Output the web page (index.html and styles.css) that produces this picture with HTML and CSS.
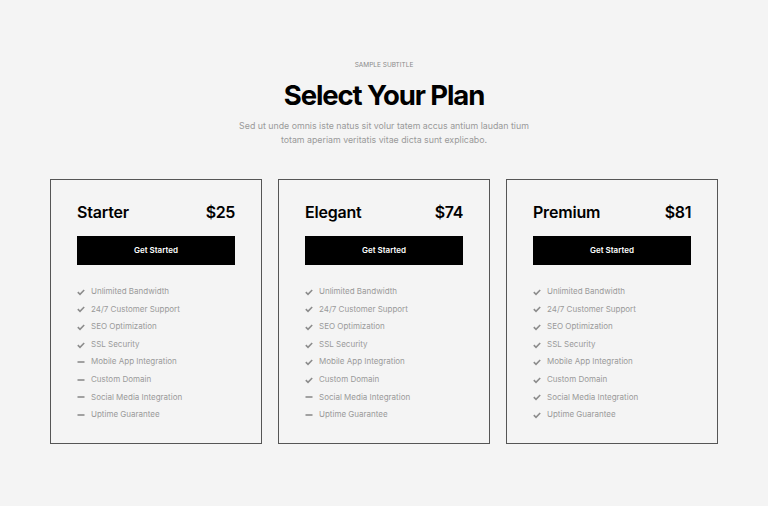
FILE: index.html
```html
<!DOCTYPE html>
<html lang="en">
<head>
    <meta charset="UTF-8">
    <meta name="viewport" content="width=device-width, initial-scale=1.0">
    <title>Select Your Plan</title>
    <link rel="stylesheet" href="styles.css">
</head>
<body>
    <section class="pricing">
        <div class="pricing-head">
            <p class="subtitle">Sample Subtitle</p>
            <h1>Select Your Plan</h1>
            <p class="lead">Sed ut unde omnis iste natus sit volur tatem accus antium laudan tium<br>totam aperiam veritatis vitae dicta sunt explicabo.</p>
        </div>

        <div class="plans">
            <div class="plan">
                <div class="plan-top">
                    <h2>Starter</h2>
                    <span class="price">$25</span>
                </div>
                <a class="button" href="#">Get Started</a>
                <ul class="features">
                    <li><svg class="icon" viewBox="0 0 8 8"><path d="M0.8 4.2 L3 6.3 L7.2 2"/></svg>Unlimited Bandwidth</li>
                    <li><svg class="icon" viewBox="0 0 8 8"><path d="M0.8 4.2 L3 6.3 L7.2 2"/></svg>24/7 Customer Support</li>
                    <li><svg class="icon" viewBox="0 0 8 8"><path d="M0.8 4.2 L3 6.3 L7.2 2"/></svg>SEO Optimization</li>
                    <li><svg class="icon" viewBox="0 0 8 8"><path d="M0.8 4.2 L3 6.3 L7.2 2"/></svg>SSL Security</li>
                    <li><svg class="icon" viewBox="0 0 8 8"><path d="M0.5 4 H7.5"/></svg>Mobile App Integration</li>
                    <li><svg class="icon" viewBox="0 0 8 8"><path d="M0.5 4 H7.5"/></svg>Custom Domain</li>
                    <li><svg class="icon" viewBox="0 0 8 8"><path d="M0.5 4 H7.5"/></svg>Social Media Integration</li>
                    <li><svg class="icon" viewBox="0 0 8 8"><path d="M0.5 4 H7.5"/></svg>Uptime Guarantee</li>
                </ul>
            </div>

            <div class="plan">
                <div class="plan-top">
                    <h2>Elegant</h2>
                    <span class="price">$74</span>
                </div>
                <a class="button" href="#">Get Started</a>
                <ul class="features">
                    <li><svg class="icon" viewBox="0 0 8 8"><path d="M0.8 4.2 L3 6.3 L7.2 2"/></svg>Unlimited Bandwidth</li>
                    <li><svg class="icon" viewBox="0 0 8 8"><path d="M0.8 4.2 L3 6.3 L7.2 2"/></svg>24/7 Customer Support</li>
                    <li><svg class="icon" viewBox="0 0 8 8"><path d="M0.8 4.2 L3 6.3 L7.2 2"/></svg>SEO Optimization</li>
                    <li><svg class="icon" viewBox="0 0 8 8"><path d="M0.8 4.2 L3 6.3 L7.2 2"/></svg>SSL Security</li>
                    <li><svg class="icon" viewBox="0 0 8 8"><path d="M0.8 4.2 L3 6.3 L7.2 2"/></svg>Mobile App Integration</li>
                    <li><svg class="icon" viewBox="0 0 8 8"><path d="M0.8 4.2 L3 6.3 L7.2 2"/></svg>Custom Domain</li>
                    <li><svg class="icon" viewBox="0 0 8 8"><path d="M0.5 4 H7.5"/></svg>Social Media Integration</li>
                    <li><svg class="icon" viewBox="0 0 8 8"><path d="M0.5 4 H7.5"/></svg>Uptime Guarantee</li>
                </ul>
            </div>

            <div class="plan">
                <div class="plan-top">
                    <h2>Premium</h2>
                    <span class="price">$81</span>
                </div>
                <a class="button" href="#">Get Started</a>
                <ul class="features">
                    <li><svg class="icon" viewBox="0 0 8 8"><path d="M0.8 4.2 L3 6.3 L7.2 2"/></svg>Unlimited Bandwidth</li>
                    <li><svg class="icon" viewBox="0 0 8 8"><path d="M0.8 4.2 L3 6.3 L7.2 2"/></svg>24/7 Customer Support</li>
                    <li><svg class="icon" viewBox="0 0 8 8"><path d="M0.8 4.2 L3 6.3 L7.2 2"/></svg>SEO Optimization</li>
                    <li><svg class="icon" viewBox="0 0 8 8"><path d="M0.8 4.2 L3 6.3 L7.2 2"/></svg>SSL Security</li>
                    <li><svg class="icon" viewBox="0 0 8 8"><path d="M0.8 4.2 L3 6.3 L7.2 2"/></svg>Mobile App Integration</li>
                    <li><svg class="icon" viewBox="0 0 8 8"><path d="M0.8 4.2 L3 6.3 L7.2 2"/></svg>Custom Domain</li>
                    <li><svg class="icon" viewBox="0 0 8 8"><path d="M0.8 4.2 L3 6.3 L7.2 2"/></svg>Social Media Integration</li>
                    <li><svg class="icon" viewBox="0 0 8 8"><path d="M0.8 4.2 L3 6.3 L7.2 2"/></svg>Uptime Guarantee</li>
                </ul>
            </div>
        </div>
    </section>
</body>
</html>
```

FILE: styles.css
```css
body {
    font-family: 'Inter', 'Noto Sans', sans-serif;
    background-color: #f4f4f4;
    color: #000;
    margin: 0;
    padding: 0;
}
.pricing {
    width: 668px;
    margin: 0 auto;
    padding-top: 60px;
}
.pricing-head {
    text-align: center;
}
.subtitle {
    margin: 0;
    font-size: 6.5px;
    line-height: 10px;
    text-transform: uppercase;
    color: #8a8a8a;
}
h1 {
    margin: 8px 0 0;
    font-size: 27.5px;
    line-height: 34px;
    font-weight: 700;
    letter-spacing: -1.1px;
}
.lead {
    margin: 7px 0 0;
    font-size: 8.8px;
    line-height: 14px;
    color: #9a9a9a;
}
.plans {
    display: grid;
    grid-template-columns: repeat(3, 1fr);
    gap: 16px;
    margin-top: 32px;
}
.plan {
    border: 1px solid #555;
    padding: 22px 26px 19px;
}
.plan-top {
    display: flex;
    justify-content: space-between;
    align-items: center;
}
h2 {
    margin: 0;
    font-size: 16px;
    line-height: 20px;
    font-weight: 600;
    letter-spacing: -0.2px;
}
.price {
    font-size: 16px;
    line-height: 20px;
    font-weight: 600;
    letter-spacing: -0.4px;
}
.button {
    display: block;
    margin-top: 14px;
    height: 29px;
    line-height: 29px;
    background-color: #000;
    color: #fff;
    text-align: center;
    text-decoration: none;
    font-size: 8px;
    font-weight: 600;
}
.features {
    list-style: none;
    margin: 18px 0 0;
    padding: 0;
}
.features li {
    display: flex;
    align-items: center;
    gap: 6px;
    font-size: 8px;
    line-height: 17.6px;
    color: #9a9a9a;
}
.icon {
    width: 8px;
    height: 8px;
    flex-shrink: 0;
    fill: none;
    stroke: #8c8c8c;
    stroke-width: 1.6;
}
```
